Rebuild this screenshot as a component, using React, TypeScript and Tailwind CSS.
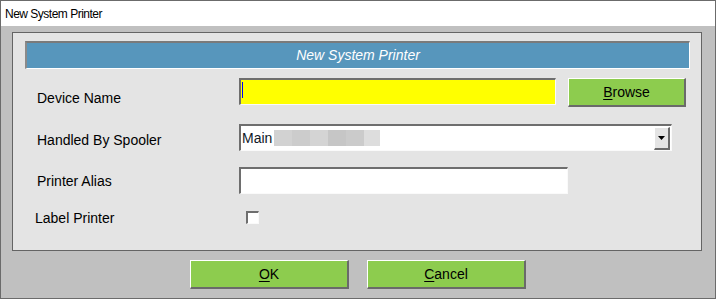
import React from 'react';

const font = { fontFamily: '"Liberation Sans", Arial, sans-serif' };

const sunken =
  'border-t-2 border-l-2 border-b border-r border-t-[#6e6e6e] border-l-[#6e6e6e] border-b-[#fafafa] border-r-[#fafafa]';
const raised =
  'border-t border-l border-b-2 border-r-2 border-t-white border-l-white border-b-[#6a6a6a] border-r-[#6a6a6a]';

const blurBlocks = ['#d2d2d2', '#cccccc', '#d4d4d4', '#c6c6c6', '#cbcbcb', '#dddddd'];

const GreenButton: React.FC<{ hot: string; rest: string; className?: string }> = ({ hot, rest, className }) => (
  <button
    className={`${raised} bg-[#8dcc4e] flex items-center justify-center text-[14px] text-black leading-none ${className ?? ''}`}
  >
    <span>
      <span className="underline underline-offset-[2px]">{hot}</span>
      {rest}
    </span>
  </button>
);

export default function App() {
  return (
    <div
      className="w-[716px] h-[299px] border border-[#6b6b6b] bg-[#c0c0c0] flex flex-col overflow-hidden"
      style={font}
    >
      {/* Title bar */}
      <div className="h-[25px] bg-white flex items-center pl-[4px] text-[12px] tracking-[-0.5px] text-black">
        New System Printer
      </div>

      {/* Body */}
      <div className="flex-1 flex flex-col">
        <div className="pl-[11px] pr-[13px] pt-[6px]">
          <div className="h-[219px] border border-[#646464] bg-[#e4e4e4] flex flex-col">
            {/* Header bar */}
            <div className="ml-[12px] mt-[8px] w-[665px] h-[28px] border-t-2 border-l-2 border-b border-r border-t-[#7a7a7a] border-l-[#8a8a8a] border-b-white border-r-white bg-[#5796bc] flex items-center justify-center text-white italic text-[14px]">
              New System Printer
            </div>

            {/* Device Name */}
            <div className="flex items-start pl-[24px] mt-[9px] h-[29px]">
              <div className="w-[202px] mt-[12px] leading-[16px] text-[14px] text-black">Device Name</div>
              <div className={`${sunken} w-[317px] h-[27px] bg-[#ffff00] flex items-center pl-[1px]`}>
                <div className="w-[1px] h-[16px] bg-[#0000ff] -mt-[5px]" />
              </div>
              <GreenButton hot="B" rest="rowse" className="ml-[12px] w-[118px] h-[29px]" />
            </div>

            {/* Handled By Spooler */}
            <div className="flex items-start pl-[24px] mt-[17px] h-[27px]">
              <div className="w-[202px] mt-[8px] leading-[16px] text-[14px] text-black">Handled By Spooler</div>
              <div className={`${sunken} w-[433px] h-[27px] bg-white flex items-center`}>
                <span className="pl-[1px] text-[14px] leading-[16px] text-[#111827]">Main</span>
                <div className="flex ml-[2px] h-[16px]">
                  {blurBlocks.map((c, i) => (
                    <div key={i} className={i === 5 ? 'w-[16px] h-full' : 'w-[18px] h-full'} style={{ background: c }} />
                  ))}
                </div>
                <div className="flex-1" />
                <div className={`${raised} w-[16px] h-[23px] bg-[#e4e4e4] flex items-center justify-center mr-[1px]`}>
                  <svg width="7" height="4" viewBox="0 0 7 4">
                    <path d="M0 0 H7 L3.5 4 Z" fill="#000" />
                  </svg>
                </div>
              </div>
            </div>

            {/* Printer Alias */}
            <div className="flex items-start pl-[24px] mt-[16px] h-[27px]">
              <div className="w-[202px] mt-[6px] leading-[16px] text-[14px] text-black">Printer Alias</div>
              <div className={`${sunken} w-[329px] h-[27px] bg-white`} />
            </div>

            {/* Label Printer */}
            <div className="flex items-start pl-[22px] mt-[16px]">
              <div className="w-[211px] leading-[16px] text-[14px] text-black">Label Printer</div>
              <div className={`${sunken} w-[13px] h-[13px] bg-white mt-[1px]`} />
            </div>
          </div>
        </div>

        {/* Buttons */}
        <div className="flex justify-center gap-[18px] mt-[9px]">
          <GreenButton hot="O" rest="K" className="w-[159px] h-[29px]" />
          <GreenButton hot="C" rest="ancel" className="w-[159px] h-[29px]" />
        </div>
      </div>
    </div>
  );
}
